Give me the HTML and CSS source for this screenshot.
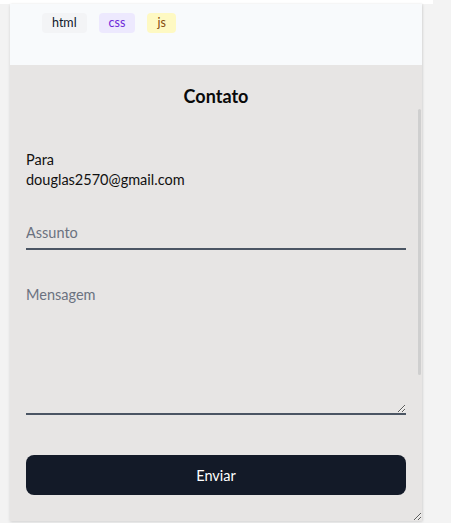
FILE: index.html
```html
<!DOCTYPE html>
<html lang="pt-BR">
<head>
<meta charset="utf-8">
<title>Contato</title>
<link rel="stylesheet" href="styles.css">
</head>
<body>
<div class="topstrip"></div>
<div class="card">
  <div class="card-head">
    <span class="tag tag-html">html</span>
    <span class="tag tag-css">css</span>
    <span class="tag tag-js">js</span>
  </div>
  <form class="panel">
    <h2 class="title">Contato</h2>
    <div class="to">
      <div>Para</div>
      <div>douglas2570@gmail.com</div>
    </div>
    <input class="field" type="text" placeholder="Assunto">
    <textarea class="field area" placeholder="Mensagem"></textarea>
    <button class="send" type="button">Enviar</button>
    <div class="thumb"></div>
  </form>
</div>
</body>
</html>
```
FILE: styles.css
```css
* { box-sizing: border-box; }
html, body { margin: 0; padding: 0; }
body {
  background: #f3f3f3;
  font-family: Lato, "Noto Sans", sans-serif;
  color: #111;
  width: 451px;
  height: 523px;
  overflow: hidden;
}
.topstrip {
  width: 433px;
  height: 4px;
  background: #ffffff;
}
.card {
  margin-left: 10px;
  width: 412px;
  box-shadow: 0 1px 3px rgba(0,0,0,0.12), 1px 0 2px rgba(0,0,0,0.06);
}
.card-head {
  height: 61px;
  background: #f8fafc;
  display: flex;
  align-items: flex-start;
  gap: 12px;
  padding: 9px 0 0 32px;
}
.tag {
  height: 20px;
  line-height: 20px;
  padding: 0 10px;
  border-radius: 4px;
  font-size: 12.5px;
  font-weight: 400;
}
.tag-html { background: #f3f4f6; color: #0f172a; }
.tag-css { background: #ede9fe; color: #6d28d9; }
.tag-js { background: #fef9c3; color: #854d0e; }
.panel {
  position: relative;
  height: 456px;
  background: #e7e5e4;
  padding: 0 16px;
  display: flex;
  flex-direction: column;
  resize: vertical;
  overflow: hidden;
  margin: 0;
}
.title {
  margin: 20px 0 0;
  height: 22px;
  line-height: 22px;
  font-size: 18px;
  font-weight: 700;
  text-align: center;
  color: #0a0a0a;
}
.to {
  margin-top: 43px;
  font-size: 14.5px;
  line-height: 20px;
  color: #111;
}
.field {
  display: block;
  width: 100%;
  margin: 20px 0 0;
  height: 40px;
  padding: 12px 0 6px;
  border: none;
  border-bottom: 2px solid #4b5563;
  background: transparent;
  font-family: inherit;
  font-size: 14.5px;
  line-height: 20px;
  color: #111;
  outline: none;
}
.field::placeholder { color: #6b7280; }
.area {
  margin-top: 23px;
  height: 142px;
  resize: vertical;
}
.send {
  margin-top: 40px;
  height: 40px;
  width: 100%;
  border: none;
  border-radius: 8px;
  background: #131a28;
  color: #ffffff;
  font-family: inherit;
  font-size: 14.5px;
}
.thumb {
  position: absolute;
  right: 1px;
  top: 44px;
  width: 3px;
  height: 266px;
  background: #cfcfcf;
  border-radius: 2px;
}
```
